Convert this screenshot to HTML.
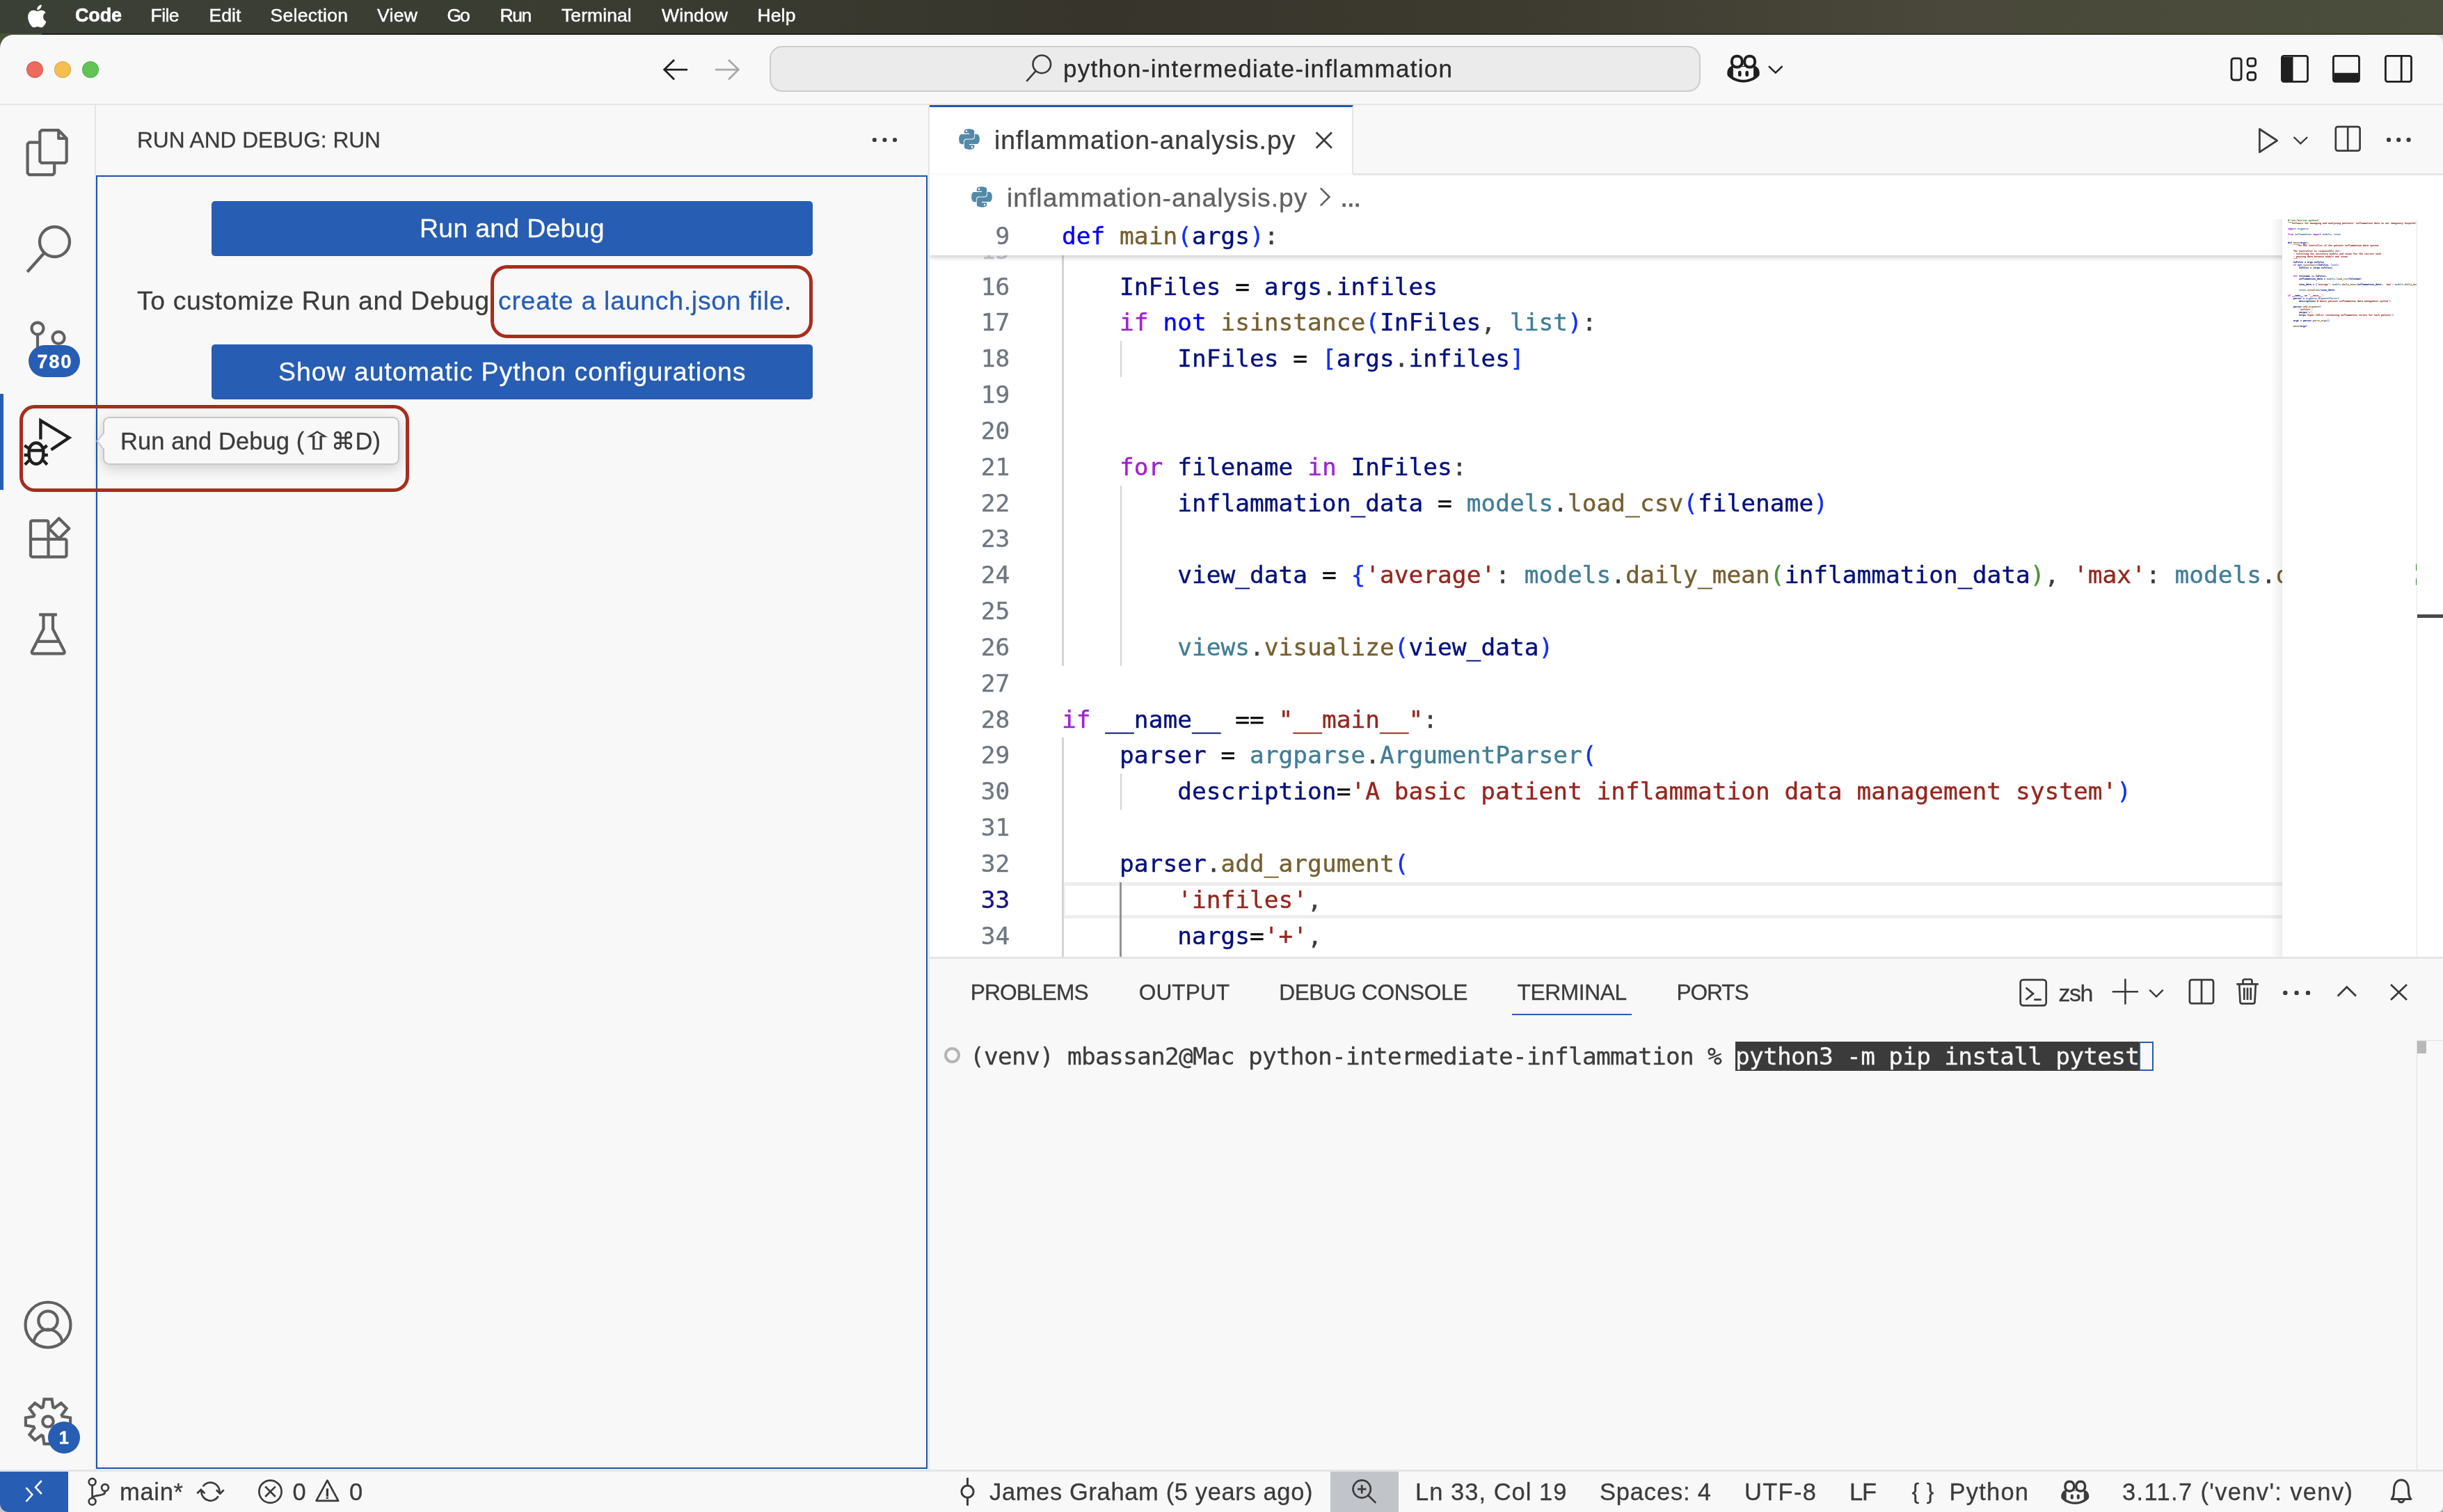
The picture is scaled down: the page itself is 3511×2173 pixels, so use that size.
<!DOCTYPE html>
<html lang="en"><head><meta charset="utf-8"><title>inflammation-analysis.py — python-intermediate-inflammation</title>
<style>
*{box-sizing:border-box;margin:0;padding:0}
html,body{width:3511px;height:2173px;overflow:hidden}
body{position:relative;background:#20231f;font-family:"Liberation Sans",sans-serif;color:#3b3b3b}
.t{position:absolute;white-space:pre;display:block;-webkit-text-stroke:0.28px}
.abs{position:absolute}
svg{position:absolute;overflow:visible}
.ic{fill:none;stroke:#616161;stroke-width:4.2;stroke-linecap:butt;stroke-linejoin:round}
.dk{stroke:#3b3b3b}
.code{position:absolute;white-space:pre;font:400 34.5px/51.84px "DejaVu Sans Mono","Liberation Mono",monospace;color:#3b3b3b;-webkit-text-stroke:0.4px}
.ln{position:absolute;white-space:pre;font:400 34.5px/51.84px "DejaVu Sans Mono","Liberation Mono",monospace;color:#6f7680;text-align:right;width:120px;-webkit-text-stroke:0.35px}
.k{color:#0000f5}.c{color:#a020d3}.f{color:#755f30}.v{color:#03107b}.s{color:#95261f}.m{color:#417d96}
.b1{color:#1330f0}.b2{color:#4e913f}.b3{color:#733c1d}.o{color:#000}.g{color:#377e22}
</style></head><body>
<div id="root" style="position:absolute;left:0;top:0;width:3511px;height:2173px;will-change:transform">

<div class="abs" id="menubar" style="left:0;top:0;width:3511px;height:48px;background:linear-gradient(90deg,#3b4036 0%,#3a3c31 25%,#37352b 45%,#3d3b30 62%,#49483a 80%,#4b4e3c 100%)"></div><div class="abs" style="left:0;top:48px;width:3511px;height:3px;background:linear-gradient(90deg,#1d201d 0%,#1f201b 50%,#3a3c2c 100%)"></div><div class="abs" style="left:3490px;top:50px;width:21px;height:28px;background:#dadada"></div>
<svg style="left:37px;top:4.500px" width="32.500" height="38" viewBox="0 0 170 200"><path fill="#fff" d="M150.4 68.2c-1 .8-18.600 10.700-18.600 32.800 0 25.500 22.400 34.600 23.100 34.800-.1.600-3.600 12.400-11.800 24.400-7.300 10.600-15 21.100-26.600 21.100s-14.600-6.800-28-6.800c-13.100 0-17.700 7-28.300 7s-18-9.800-26.600-21.700C23.800 145.600 16 123.700 16 102.900c0-33.300 21.700-51 43-51 11.300 0 20.800 7.400 27.900 7.400 6.800 0 17.300-7.900 30.200-7.900 4.900 0 22.400.4 33.300 16.800zM110.300 37.100c5.300-6.300 9.100-15.100 9.100-23.900 0-1.200-.1-2.400-.3-3.400-8.700.3-19 5.800-25.200 13-4.900 5.600-9.500 14.400-9.500 23.300 0 1.300.2 2.700.3 3.100.5.100 1.400.2 2.300.2 7.800 0 17.600-5.200 23.300-12.300z"/></svg>
<span id="t0" class="t" style="left:108.0px;top:4.7px;font:700 27.00px/35px 'Liberation Sans', sans-serif;color:#fff;letter-spacing:-0.167px;-webkit-text-stroke:0.6px #fff;">Code</span>
<span id="t1" class="t" style="left:216.6px;top:5.2px;font:400 26.50px/34px 'Liberation Sans', sans-serif;color:#fff;letter-spacing:-0.634px;-webkit-text-stroke:0.45px #fff;">File</span>
<span id="t2" class="t" style="left:300.6px;top:5.2px;font:400 26.50px/34px 'Liberation Sans', sans-serif;color:#fff;letter-spacing:0.009px;-webkit-text-stroke:0.45px #fff;">Edit</span>
<span id="t3" class="t" style="left:388.5px;top:5.2px;font:400 26.50px/34px 'Liberation Sans', sans-serif;color:#fff;letter-spacing:0.311px;-webkit-text-stroke:0.45px #fff;">Selection</span>
<span id="t4" class="t" style="left:542.0px;top:5.2px;font:400 26.50px/34px 'Liberation Sans', sans-serif;color:#fff;letter-spacing:0.344px;-webkit-text-stroke:0.45px #fff;">View</span>
<span id="t5" class="t" style="left:642.4px;top:5.2px;font:400 26.50px/34px 'Liberation Sans', sans-serif;color:#fff;letter-spacing:-1.959px;-webkit-text-stroke:0.45px #fff;">Go</span>
<span id="t6" class="t" style="left:718.6px;top:5.2px;font:400 26.50px/34px 'Liberation Sans', sans-serif;color:#fff;letter-spacing:-1.512px;-webkit-text-stroke:0.45px #fff;">Run</span>
<span id="t7" class="t" style="left:807.0px;top:5.2px;font:400 26.50px/34px 'Liberation Sans', sans-serif;color:#fff;letter-spacing:0.080px;-webkit-text-stroke:0.45px #fff;">Terminal</span>
<span id="t8" class="t" style="left:951.0px;top:5.2px;font:400 26.50px/34px 'Liberation Sans', sans-serif;color:#fff;letter-spacing:0.147px;-webkit-text-stroke:0.45px #fff;">Window</span>
<span id="t9" class="t" style="left:1088.4px;top:5.2px;font:400 26.50px/34px 'Liberation Sans', sans-serif;color:#fff;letter-spacing:0.161px;-webkit-text-stroke:0.45px #fff;">Help</span>
<div class="abs" style="left:0;top:2150px;width:40px;height:23px;background:#c9c9c9"></div><div class="abs" style="left:3490px;top:2150px;width:21px;height:23px;background:#a9a9a9"></div><div class="abs" style="left:0;top:48px;width:60px;height:40px;background:#485237"></div><div class="abs" id="win" style="left:0;top:49.500px;width:3511px;height:2123.500px;background:#f8f8f8;border-radius:19px 13px 7px 12px;overflow:hidden">
<div class="abs" style="left:0;top:-49.500px;width:3511px;height:2173px;will-change:transform">
<div class="abs" style="left:0;top:149px;width:3511px;height:2px;background:#e4e4e4"></div>
<div class="abs" style="left:38.0px;top:87.8px;width:24px;height:24px;border-radius:50%;background:#ed6a5e;box-shadow:inset 0 0 0 1px rgba(0,0,0,.12)"></div>
<div class="abs" style="left:78.0px;top:87.8px;width:24px;height:24px;border-radius:50%;background:#f4bf4f;box-shadow:inset 0 0 0 1px rgba(0,0,0,.12)"></div>
<div class="abs" style="left:118.0px;top:87.8px;width:24px;height:24px;border-radius:50%;background:#61c554;box-shadow:inset 0 0 0 1px rgba(0,0,0,.12)"></div>
<svg style="left:940px;top:76px" width="140" height="50" viewBox="940 76 140 50"><path d="M988 100.100H955M969 85.900l-14.300 14.200 14.300 14.200" fill="none" stroke="#1f1f1f" stroke-width="2.800"/><path d="M1028 100.100h33M1047 85.900l14.300 14.200-14.300 14.200" fill="none" stroke="#a8a8a8" stroke-width="2.800"/></svg>
<div class="abs" style="left:1106px;top:66px;width:1338px;height:66px;background:#ebebeb;border:2px solid #cdcdcd;border-radius:18px"></div>
<svg style="left:1470px;top:76px" width="50" height="50" viewBox="1470 76 50 50"><circle cx="1497.300" cy="92.300" r="12.800" fill="none" stroke="#3b3b3b" stroke-width="2.600"/><path d="M1488.700 101.800L1475.300 116.800" stroke="#3b3b3b" stroke-width="2.600" fill="none"/></svg>
<span id="t10" class="t" style="left:1528.0px;top:76.3px;font:400 35.00px/46px 'Liberation Sans', sans-serif;color:#2a2a2a;letter-spacing:1.277px;">python-intermediate-inflammation</span>
<svg id="copilot1" style="left:2482px;top:78.300px" width="47" height="40.400" viewBox="0 0 47 40.400"><path d="M6 17C2 19.500.3 22.500.3 27c0 2 .2 3 .7 4 5 5.500 13 9.400 22.500 9.400S41 36.500 46 31c.5-1 .7-2 .7-4 0-4.500-1.700-7.500-5.700-10z" fill="#1f1f1f"/><path d="M8.900 18h29.200v14.400c-4.100 2.600-9.100 4.300-14.600 4.300s-10.500-1.700-14.600-4.300z" fill="#f8f8f8"/><rect x="6.900" y="2.700" width="14.900" height="15.800" rx="6.500" ry="7" fill="#f8f8f8" stroke="#1f1f1f" stroke-width="4"/><rect x="25.200" y="2.700" width="14.900" height="15.800" rx="6.500" ry="7" fill="#f8f8f8" stroke="#1f1f1f" stroke-width="4"/><rect x="16" y="23.800" width="4.600" height="8.300" rx="2.300" fill="#1f1f1f"/><rect x="26.400" y="23.800" width="4.600" height="8.300" rx="2.300" fill="#1f1f1f"/></svg>
<svg style="left:2536px;top:88px" width="32" height="24" viewBox="2536 88 32 24"><path d="M2542 95.200l9.800 9.400 9.800-9.400" fill="none" stroke="#1f1f1f" stroke-width="2.500"/></svg>
<svg style="left:3205px;top:81.500px" width="40" height="36" viewBox="0 0 40 36"><g fill="none" stroke="#1f1f1f" stroke-width="2.800"><rect x="2" y="1.800" width="14.100" height="31.200" rx="3.500"/><rect x="25.100" y="1.800" width="11.500" height="11.200" rx="3.200"/><rect x="25.100" y="22" width="11.500" height="11" rx="3.200"/></g></svg>
<svg style="left:3277.800px;top:79px" width="40" height="40" viewBox="0 0 40 40"><path d="M2 3h15.500v34H2z" fill="#1f1f1f"/><rect x="1.400" y="1.400" width="37.100" height="36.900" rx="2.800" fill="none" stroke="#1f1f1f" stroke-width="2.800"/></svg>
<svg style="left:3352.300px;top:79px" width="40" height="40" viewBox="0 0 40 40"><path d="M2.500 25.800h35v11.500h-35z" fill="#1f1f1f"/><rect x="1.400" y="1.400" width="37.100" height="36.900" rx="2.800" fill="none" stroke="#1f1f1f" stroke-width="2.800"/></svg>
<svg style="left:3427.300px;top:79px" width="40" height="40" viewBox="0 0 40 40"><rect x="1.400" y="1.400" width="37.100" height="36.900" rx="2.800" fill="none" stroke="#1f1f1f" stroke-width="2.800"/><path d="M24.200 2v36" stroke="#1f1f1f" stroke-width="2.800"/></svg>
<div class="abs" style="left:136.200px;top:151px;width:2px;height:1961.500px;background:#e5e5e5"></div>
<div class="abs" style="left:0;top:566px;width:5px;height:138px;background:#275db2"></div>
<svg style="left:20px;top:170px" width="110" height="360" viewBox="20 170 110 360"><g class="ic" stroke-width="4.200" stroke-linejoin="bevel"><path d="M84.200 187.200H59.800L57.300 189.700V231.700L59.800 234.200H93.200L95.700 231.700V198.900zM84.200 187.200V198.900H95.700"/><path d="M57.300 204.600H42.100L39.600 207.100V248.700L42.100 251.200H75.700L78.200 248.700V234.200"/><circle cx="78.500" cy="347.500" r="21.500" stroke-width="4.300"/><path d="M63.800 363.200L39.300 390.800" stroke-width="4.300"/><circle cx="54" cy="472.100" r="8.500"/><circle cx="84.100" cy="485.400" r="8.500"/><path d="M54 480.600V500"/></g></svg>
<div class="abs" style="left:41px;top:496px;width:74px;height:45.700px;border-radius:23px;background:#275db2"></div>
<span id="t11" class="t" style="left:53.3px;top:502.2px;font:700 27.50px/36px 'Liberation Sans', sans-serif;color:#fff;letter-spacing:1.655px;">780</span>
<svg style="left:20px;top:590px" width="110" height="90" viewBox="20 590 110 90"><g fill="none" stroke="#1f1f1f" stroke-width="4.400" stroke-linejoin="miter"><path d="M58.400 631.500V604.300L99.300 629 73.500 646.300"/><rect x="41.700" y="636.500" width="20.600" height="30.200" rx="10.300" ry="12.500"/><path d="M41.500 647.400h21"/><path d="M42.500 645.300L35.200 640.200M61.500 645.300l6.100-5.100M34.600 654h6M63.800 654h5M41.800 661.700L35.800 667.700M62.200 661.700l5.600 6"/></g></svg>
<svg style="left:20px;top:720px" width="110" height="240" viewBox="20 720 110 240"><g class="ic" stroke-width="4.300"><path d="M46.500 748.300h20.500a2.500 2.500 0 0 1 2.500 2.500v49.500H46.500a2.500 2.500 0 0 1-2.500-2.500v-47a2.500 2.500 0 0 1 2.500-2.500zM44 774.800h49a2.500 2.500 0 0 1 2.500 2.500v20.500a2.500 2.500 0 0 1-2.500 2.500H69.500"/><path d="M84.800 744.900l14.500 14.500-14.500 14.500-14.500-14.500z"/><path d="M56.200 883.300h25.700M62.500 883.500v20.500L46 936c-.9 1.700.1 3.400 2 3.400h42.500c1.900 0 2.900-1.700 2-3.400L76 904v-20.500M53.500 921.900h31.500"/></g></svg>
<svg style="left:34px;top:1869px" width="70" height="70" viewBox="0 0 70 70"><g class="ic" stroke-width="4.400"><circle cx="35" cy="35" r="32.500"/><circle cx="35" cy="29" r="13.700"/><path d="M14.500 59c2.500-10.500 10.500-17.300 20.500-17.300S53 48.500 55.500 59"/></g></svg>
<svg style="left:34px;top:2007.500px" width="70" height="70" viewBox="0 0 70 70"><g class="ic" stroke-width="4.300"><path d="M27.7 14.4L29.5 2.9L40.5 2.9L42.3 14.4L44.4 15.3L53.8 8.4L61.6 16.2L54.7 25.6L55.6 27.7L67.1 29.5L67.1 40.5L55.6 42.3L54.7 44.4L61.6 53.8L53.8 61.6L44.4 54.7L42.3 55.6L40.5 67.1L29.5 67.1L27.7 55.6L25.6 54.7L16.2 61.6L8.4 53.8L15.3 44.4L14.4 42.3L2.9 40.5L2.9 29.5L14.4 27.7L15.3 25.6L8.4 16.2L16.2 8.4L25.6 15.3z" stroke-linejoin="miter"/><circle cx="35" cy="35" r="7.700"/></g></svg>
<div class="abs" style="left:69px;top:2043px;width:46px;height:46px;border-radius:50%;background:#275db2"></div>
<span id="t12" class="t" style="left:84.5px;top:2049.0px;font:700 26.00px/34px 'Liberation Sans', sans-serif;color:#fff;letter-spacing:0.031px;">1</span>
<span id="t13" class="t" style="left:197.0px;top:181.0px;font:400 31.70px/41px 'Liberation Sans', sans-serif;color:#3b3b3b;letter-spacing:-0.021px;">RUN AND DEBUG: RUN</span>
<svg style="left:1250px;top:190px" width="44" height="22" viewBox="1250 190 44 22"><g fill="#3b3b3b"><circle cx="1256.800" cy="201" r="3.100"/><circle cx="1271.400" cy="201" r="3.100"/><circle cx="1286" cy="201" r="3.100"/></g></svg>
<div class="abs" style="left:138px;top:252px;width:1195px;height:1859.400px;border:2px solid #1c52aa"></div>
<div class="abs" style="left:304px;top:289px;width:864px;height:78.500px;background:#275db2;border-radius:5px"></div>
<span id="t14" class="t" style="left:603.0px;top:304.0px;font:400 37.40px/49px 'Liberation Sans', sans-serif;color:#fff;letter-spacing:0.297px;-webkit-text-stroke:0.3px #fff;">Run and Debug</span>
<span id="t15" class="t" style="left:197.0px;top:407.5px;font:400 37.40px/49px 'Liberation Sans', sans-serif;color:#3b3b3b;letter-spacing:0.619px;">To customize Run and Debug</span>
<span id="t16" class="t" style="left:716.0px;top:407.5px;font:400 37.40px/49px 'Liberation Sans', sans-serif;color:#275db2;letter-spacing:0.736px;">create a launch.json file</span>
<span id="t17" class="t" style="left:1127.0px;top:407.5px;font:400 37.40px/49px 'Liberation Sans', sans-serif;color:#3b3b3b;letter-spacing:0.000px;">.</span>
<div class="abs" style="left:304px;top:495px;width:864px;height:78.500px;background:#275db2;border-radius:5px"></div>
<span id="t18" class="t" style="left:400.0px;top:510.0px;font:400 37.40px/49px 'Liberation Sans', sans-serif;color:#fff;letter-spacing:1.014px;-webkit-text-stroke:0.3px #fff;">Show automatic Python configurations</span>
<div class="abs" style="left:1336px;top:151px;width:2175px;height:1224px;background:#fff"></div>
<div class="abs" style="left:1334px;top:151px;width:2px;height:1961.500px;background:#e4e4e4"></div>
<div class="abs" style="left:1336px;top:151px;width:2175px;height:101px;background:#f8f8f8;border-bottom:3px solid #e5e5e5"></div>
<div class="abs" style="left:1336px;top:151px;width:609px;height:101px;background:#fff;border-top:3px solid #2058b0;border-right:2px solid #e4e4e4;border-bottom:3px solid #f9f9f9"></div>
<svg style="left:1375.8px;top:183.2px" width="34" height="34" viewBox="0 0 32 32"><path fill="#5389a8" d="M15.900 2c-7.100 0-6.700 3.100-6.700 3.100v3.200h6.800v1H6.500S2 8.800 2 16s4 6.900 4 6.900h2.400v-3.300s-.1-4 3.900-4h6.700s3.800.1 3.800-3.600V5.800S23.400 2 15.900 2zm-3.700 2.100a1.200 1.200 0 1 1 0 2.400 1.200 1.200 0 0 1 0-2.400z"/><path fill="#5389a8" d="M16.100 30c7.100 0 6.700-3.100 6.700-3.100v-3.200H16v-1h9.500S30 23.200 30 16s-4-6.900-4-6.900h-2.400v3.300s.1 4-3.900 4H13s-3.800-.1-3.800 3.600v6.200S8.600 30 16.100 30zm3.700-2.100a1.200 1.200 0 1 1 0-2.400 1.200 1.200 0 0 1 0 2.400z"/></svg>
<span id="t19" class="t" style="left:1429.0px;top:177.0px;font:400 37.40px/49px 'Liberation Sans', sans-serif;color:#3b3b3b;letter-spacing:1.005px;">inflammation-analysis.py</span>
<svg style="left:1885px;top:185px" width="36" height="34" viewBox="1885 185 36 34"><path d="M1891.700 190.200l22.200 22.600M1913.900 190.200l-22.200 22.600" fill="none" stroke="#3b3b3b" stroke-width="2.700"/></svg>
<svg style="left:3230px;top:170px" width="260" height="64" viewBox="3230 170 260 64"><g fill="none" stroke="#3b3b3b" stroke-width="2.700"><path d="M3247.400 185.500v33.200L3272.600 202z" stroke-linejoin="round"/><path d="M3296.500 197l9.800 9.300 9.800-9.300" stroke-width="2.400"/><rect x="3356.800" y="182.200" width="34.800" height="34.400" rx="3"/><path d="M3374.200 182.500v34"/></g><g fill="#3b3b3b"><circle cx="3433" cy="200.900" r="3.100"/><circle cx="3447.200" cy="200.900" r="3.100"/><circle cx="3461.600" cy="200.900" r="3.100"/></g></svg>
<svg style="left:1393.7px;top:265.8px" width="34" height="34" viewBox="0 0 32 32"><path fill="#5389a8" d="M15.900 2c-7.100 0-6.700 3.100-6.700 3.100v3.200h6.800v1H6.500S2 8.800 2 16s4 6.900 4 6.900h2.400v-3.300s-.1-4 3.900-4h6.700s3.800.1 3.800-3.600V5.800S23.400 2 15.900 2zm-3.700 2.100a1.200 1.200 0 1 1 0 2.400 1.200 1.200 0 0 1 0-2.400z"/><path fill="#5389a8" d="M16.100 30c7.100 0 6.700-3.100 6.700-3.100v-3.200H16v-1h9.500S30 23.200 30 16s-4-6.900-4-6.900h-2.400v3.300s.1 4-3.900 4H13s-3.800-.1-3.800 3.600v6.200S8.600 30 16.100 30zm3.700-2.100a1.200 1.200 0 1 1 0-2.400 1.200 1.200 0 0 1 0 2.400z"/></svg>
<span id="t20" class="t" style="left:1447.0px;top:259.5px;font:400 37.40px/49px 'Liberation Sans', sans-serif;color:#616161;letter-spacing:0.961px;">inflammation-analysis.py</span>
<svg style="left:1890px;top:270px" width="28" height="36" viewBox="1890 270 28 36"><path d="M1897.800 270.300l12.700 12.700-12.700 12.700" fill="none" stroke="#616161" stroke-width="2.600"/></svg>
<span id="t21" class="t" style="left:1926.2px;top:267.3px;font:700 30.00px/39px 'Liberation Sans', sans-serif;color:#616161;letter-spacing:0.000px;">…</span>
<div class="abs" id="edclip" style="left:1336px;top:315px;width:1944px;height:1060px;overflow:hidden">
<div class="abs" style="left:193.0px;top:953.0px;width:2000px;height:52.0px;border-top:5px solid #eee;border-bottom:5px solid #eee;border-left:2px solid #f1f1f1"></div>
<div class="abs" style="left:190.4px;top:19.6px;width:2.6px;height:622.1px;background:#d4d4d4"></div>
<div class="abs" style="left:273.5px;top:175.2px;width:2.6px;height:51.8px;background:#d4d4d4"></div>
<div class="abs" style="left:273.5px;top:382.5px;width:2.6px;height:259.2px;background:#d4d4d4"></div>
<div class="abs" style="left:190.4px;top:745.4px;width:2.6px;height:362.9px;background:#d4d4d4"></div>
<div class="abs" style="left:273.5px;top:797.2px;width:2.6px;height:51.8px;background:#d4d4d4"></div>
<div class="abs" style="left:273.2px;top:952.8px;width:3.0px;height:155.5px;background:#939393"></div>
<div class="ln" style="left:-4.8px;top:19.6px;color:#c9ccd0">15</div>
<div class="ln" style="left:-4.8px;top:71.5px;color:#6f7680">16</div>
<div class="code" style="left:190.0px;top:71.5px"><span class="v">    InFiles</span> <span class="o">=</span> <span class="v">args</span>.<span class="v">infiles</span></div>
<div class="ln" style="left:-4.8px;top:123.3px;color:#6f7680">17</div>
<div class="code" style="left:190.0px;top:123.3px"><span class="c">    if</span> <span class="k">not</span> <span class="f">isinstance</span><span class="b1">(</span><span class="v">InFiles</span>, <span class="m">list</span><span class="b1">)</span>:</div>
<div class="ln" style="left:-4.8px;top:175.2px;color:#6f7680">18</div>
<div class="code" style="left:190.0px;top:175.2px"><span class="v">        InFiles</span> <span class="o">=</span> <span class="b1">[</span><span class="v">args</span>.<span class="v">infiles</span><span class="b1">]</span></div>
<div class="ln" style="left:-4.8px;top:227.0px;color:#6f7680">19</div>
<div class="ln" style="left:-4.8px;top:278.8px;color:#6f7680">20</div>
<div class="ln" style="left:-4.8px;top:330.7px;color:#6f7680">21</div>
<div class="code" style="left:190.0px;top:330.7px"><span class="c">    for</span> <span class="v">filename</span> <span class="c">in</span> <span class="v">InFiles</span>:</div>
<div class="ln" style="left:-4.8px;top:382.5px;color:#6f7680">22</div>
<div class="code" style="left:190.0px;top:382.5px"><span class="v">        inflammation_data</span> <span class="o">=</span> <span class="m">models</span>.<span class="f">load_csv</span><span class="b1">(</span><span class="v">filename</span><span class="b1">)</span></div>
<div class="ln" style="left:-4.8px;top:434.4px;color:#6f7680">23</div>
<div class="ln" style="left:-4.8px;top:486.2px;color:#6f7680">24</div>
<div class="code" style="left:190.0px;top:486.2px"><span class="v">        view_data</span> <span class="o">=</span> <span class="b1">{</span><span class="s">&#x27;average&#x27;</span>: <span class="m">models</span>.<span class="f">daily_mean</span><span class="b2">(</span><span class="v">inflammation_data</span><span class="b2">)</span>, <span class="s">&#x27;max&#x27;</span>: <span class="m">models</span>.<span class="f">daily_max</span><span class="b2">(</span><span class="v">inflammation_data</span><span class="b2">)</span>, <span class="s">&#x27;min&#x27;</span>: <span class="m">models</span>.<span class="f">daily_min</span><span class="b2">(</span><span class="v">inflammation_data</span><span class="b2">)</span><span class="b1">}</span></div>
<div class="ln" style="left:-4.8px;top:538.0px;color:#6f7680">25</div>
<div class="ln" style="left:-4.8px;top:589.9px;color:#6f7680">26</div>
<div class="code" style="left:190.0px;top:589.9px"><span class="m">        views</span>.<span class="f">visualize</span><span class="b1">(</span><span class="v">view_data</span><span class="b1">)</span></div>
<div class="ln" style="left:-4.8px;top:641.7px;color:#6f7680">27</div>
<div class="ln" style="left:-4.8px;top:693.6px;color:#6f7680">28</div>
<div class="code" style="left:190.0px;top:693.6px"><span class="c">if</span> <span class="v">__name__</span> <span class="o">==</span> <span class="s">&quot;__main__&quot;</span>:</div>
<div class="ln" style="left:-4.8px;top:745.4px;color:#6f7680">29</div>
<div class="code" style="left:190.0px;top:745.4px"><span class="v">    parser</span> <span class="o">=</span> <span class="m">argparse</span>.<span class="m">ArgumentParser</span><span class="b1">(</span></div>
<div class="ln" style="left:-4.8px;top:797.2px;color:#6f7680">30</div>
<div class="code" style="left:190.0px;top:797.2px"><span class="v">        description</span><span class="o">=</span><span class="s">&#x27;A basic patient inflammation data management system&#x27;</span><span class="b1">)</span></div>
<div class="ln" style="left:-4.8px;top:849.1px;color:#6f7680">31</div>
<div class="ln" style="left:-4.8px;top:900.9px;color:#6f7680">32</div>
<div class="code" style="left:190.0px;top:900.9px"><span class="v">    parser</span>.<span class="f">add_argument</span><span class="b1">(</span></div>
<div class="ln" style="left:-4.8px;top:952.8px;color:#16117f">33</div>
<div class="code" style="left:190.0px;top:952.8px"><span class="s">        &#x27;infiles&#x27;</span>,</div>
<div class="ln" style="left:-4.8px;top:1004.6px;color:#6f7680">34</div>
<div class="code" style="left:190.0px;top:1004.6px"><span class="v">        nargs</span><span class="o">=</span><span class="s">&#x27;+&#x27;</span>,</div>
<div class="abs" style="left:0;top:0;width:2244px;height:51.800px;background:#fff;box-shadow:0 2px 7px 1px rgba(0,0,0,.2)"></div>
<div class="ln" style="left:-4.8px;top:-0.9px">9</div>
<div class="code" style="left:190.0px;top:-0.9px"><span class="k">def</span> <span class="f">main</span><span class="b1">(</span><span class="v">args</span><span class="b1">)</span>:</div>
</div>
<div class="abs" id="minimap" style="left:3280px;top:315px;width:193px;height:1060px;background:#fff;overflow:hidden">
<div class="abs" style="left:8px;top:0px;transform-origin:0 0;transform:scale(0.09625,0.07716);width:4000px">
<div class="code" style="left:0;top:0.00px;font-weight:700"><span class="g">#!/usr/bin/env python3</span></div>
<div class="code" style="left:0;top:51.84px;font-weight:700"><span class="s">&quot;&quot;&quot;Software for managing and analysing patients&#x27; inflammation data in our imaginary hospital.&quot;&quot;&quot;</span></div>
<div class="code" style="left:0;top:103.68px;font-weight:700"></div>
<div class="code" style="left:0;top:155.52px;font-weight:700"><span class="c">import</span> <span class="m">argparse</span></div>
<div class="code" style="left:0;top:207.36px;font-weight:700"></div>
<div class="code" style="left:0;top:259.20px;font-weight:700"><span class="c">from</span> <span class="m">inflammation</span> <span class="c">import</span> <span class="m">models</span>, <span class="m">views</span></div>
<div class="code" style="left:0;top:311.04px;font-weight:700"></div>
<div class="code" style="left:0;top:362.88px;font-weight:700"></div>
<div class="code" style="left:0;top:414.72px;font-weight:700"><span class="k">def</span> <span class="f">main</span><span class="b1">(</span><span class="v">args</span><span class="b1">)</span>:</div>
<div class="code" style="left:0;top:466.56px;font-weight:700"><span class="s">    &quot;&quot;&quot;The MVC Controller of the patient inflammation data system.</span></div>
<div class="code" style="left:0;top:518.40px;font-weight:700"></div>
<div class="code" style="left:0;top:570.24px;font-weight:700"><span class="s">    The Controller is responsible for:</span></div>
<div class="code" style="left:0;top:622.08px;font-weight:700"><span class="s">    - selecting the necessary models and views for the current task</span></div>
<div class="code" style="left:0;top:673.92px;font-weight:700"><span class="s">    - passing data between models and views</span></div>
<div class="code" style="left:0;top:725.76px;font-weight:700"><span class="s">    &quot;&quot;&quot;</span></div>
<div class="code" style="left:0;top:777.60px;font-weight:700"><span class="v">    InFiles</span> <span class="o">=</span> <span class="v">args</span>.<span class="v">infiles</span></div>
<div class="code" style="left:0;top:829.44px;font-weight:700"><span class="c">    if</span> <span class="k">not</span> <span class="f">isinstance</span><span class="b1">(</span><span class="v">InFiles</span>, <span class="m">list</span><span class="b1">)</span>:</div>
<div class="code" style="left:0;top:881.28px;font-weight:700"><span class="v">        InFiles</span> <span class="o">=</span> <span class="b1">[</span><span class="v">args</span>.<span class="v">infiles</span><span class="b1">]</span></div>
<div class="code" style="left:0;top:933.12px;font-weight:700"></div>
<div class="code" style="left:0;top:984.96px;font-weight:700"></div>
<div class="code" style="left:0;top:1036.80px;font-weight:700"><span class="c">    for</span> <span class="v">filename</span> <span class="c">in</span> <span class="v">InFiles</span>:</div>
<div class="code" style="left:0;top:1088.64px;font-weight:700"><span class="v">        inflammation_data</span> <span class="o">=</span> <span class="m">models</span>.<span class="f">load_csv</span><span class="b1">(</span><span class="v">filename</span><span class="b1">)</span></div>
<div class="code" style="left:0;top:1140.48px;font-weight:700"></div>
<div class="code" style="left:0;top:1192.32px;font-weight:700"><span class="v">        view_data</span> <span class="o">=</span> <span class="b1">{</span><span class="s">&#x27;average&#x27;</span>: <span class="m">models</span>.<span class="f">daily_mean</span><span class="b2">(</span><span class="v">inflammation_data</span><span class="b2">)</span>, <span class="s">&#x27;max&#x27;</span>: <span class="m">models</span>.<span class="f">daily_max</span><span class="b2">(</span><span class="v">inflammation_data</span><span class="b2">)</span>, <span class="s">&#x27;min&#x27;</span>: <span class="m">models</span>.<span class="f">daily_min</span><span class="b2">(</span><span class="v">inflammation_data</span><span class="b2">)</span><span class="b1">}</span></div>
<div class="code" style="left:0;top:1244.16px;font-weight:700"></div>
<div class="code" style="left:0;top:1296.00px;font-weight:700"><span class="m">        views</span>.<span class="f">visualize</span><span class="b1">(</span><span class="v">view_data</span><span class="b1">)</span></div>
<div class="code" style="left:0;top:1347.84px;font-weight:700"></div>
<div class="code" style="left:0;top:1399.68px;font-weight:700"><span class="c">if</span> <span class="v">__name__</span> <span class="o">==</span> <span class="s">&quot;__main__&quot;</span>:</div>
<div class="code" style="left:0;top:1451.52px;font-weight:700"><span class="v">    parser</span> <span class="o">=</span> <span class="m">argparse</span>.<span class="m">ArgumentParser</span><span class="b1">(</span></div>
<div class="code" style="left:0;top:1503.36px;font-weight:700"><span class="v">        description</span><span class="o">=</span><span class="s">&#x27;A basic patient inflammation data management system&#x27;</span><span class="b1">)</span></div>
<div class="code" style="left:0;top:1555.20px;font-weight:700"></div>
<div class="code" style="left:0;top:1607.04px;font-weight:700"><span class="v">    parser</span>.<span class="f">add_argument</span><span class="b1">(</span></div>
<div class="code" style="left:0;top:1658.88px;font-weight:700"><span class="s">        &#x27;infiles&#x27;</span>,</div>
<div class="code" style="left:0;top:1710.72px;font-weight:700"><span class="v">        nargs</span><span class="o">=</span><span class="s">&#x27;+&#x27;</span>,</div>
<div class="code" style="left:0;top:1762.56px;font-weight:700"><span class="v">        help</span><span class="o">=</span><span class="s">&#x27;Input CSV(s) containing inflammation series for each patient&#x27;</span><span class="b1">)</span></div>
<div class="code" style="left:0;top:1814.40px;font-weight:700"></div>
<div class="code" style="left:0;top:1866.24px;font-weight:700"><span class="v">    args</span> <span class="o">=</span> <span class="v">parser</span>.<span class="f">parse_args</span><span class="b1">()</span></div>
<div class="code" style="left:0;top:1918.08px;font-weight:700"></div>
<div class="code" style="left:0;top:1969.92px;font-weight:700"><span class="f">    main</span><span class="b1">(</span><span class="v">args</span><span class="b1">)</span></div>
</div></div>
<div class="abs" style="left:3263px;top:315px;width:17px;height:1060px;background:linear-gradient(90deg,rgba(0,0,0,0),rgba(0,0,0,.065))"></div>
<div class="abs" style="left:3472.800px;top:315px;width:1.200px;height:1060px;background:#e6e6e6"></div>
<div class="abs" style="left:3474px;top:883.200px;width:37px;height:5px;background:#4a4a4a"></div>
<div class="abs" style="left:3471.600px;top:810px;width:1.300px;height:10px;background:#4e913f;border-radius:1px"></div><div class="abs" style="left:3471.600px;top:831px;width:1.300px;height:10px;background:#4e913f;border-radius:1px"></div>
<div class="abs" style="left:1336px;top:1375px;width:2175px;height:2.700px;background:#e5e5e5"></div>
<span id="t22" class="t" style="left:1394.7px;top:1406.0px;font:400 31.70px/41px 'Liberation Sans', sans-serif;color:#3b3b3b;letter-spacing:-0.885px;">PROBLEMS</span>
<span id="t23" class="t" style="left:1636.8px;top:1406.0px;font:400 31.70px/41px 'Liberation Sans', sans-serif;color:#3b3b3b;letter-spacing:-0.013px;">OUTPUT</span>
<span id="t24" class="t" style="left:1838.2px;top:1406.0px;font:400 31.70px/41px 'Liberation Sans', sans-serif;color:#3b3b3b;letter-spacing:-0.446px;">DEBUG CONSOLE</span>
<span id="t25" class="t" style="left:2180.5px;top:1406.0px;font:400 31.70px/41px 'Liberation Sans', sans-serif;color:#3b3b3b;letter-spacing:-0.360px;">TERMINAL</span>
<span id="t26" class="t" style="left:2409.4px;top:1406.0px;font:400 31.70px/41px 'Liberation Sans', sans-serif;color:#3b3b3b;letter-spacing:-1.073px;">PORTS</span>
<div class="abs" style="left:2173px;top:1456.800px;width:171.500px;height:2px;background:#275db2"></div>
<svg style="left:2890px;top:1395px" width="600" height="64" viewBox="2890 1395 600 64"><g fill="none" stroke="#3b3b3b" stroke-width="2.700"><rect x="2903.700" y="1408.100" width="37" height="37" rx="4"/><path d="M2911.600 1419.500l10.400 8.600-10.400 8.600M2923.200 1436.700h10.500"/><path d="M3054.400 1406.700v36.900M3035.700 1425.200H3073" stroke-width="2.600"/><path d="M3089.300 1422.700l9.700 9.700 9.700-9.700" stroke-width="2.400"/><rect x="3146.900" y="1408.100" width="34.100" height="34.100" rx="3"/><path d="M3164 1408.500v33.500"/><path d="M3214.300 1414.300h31.500M3223.500 1414v-4a2.500 2.500 0 0 1 2.500-2.500h8a2.500 2.500 0 0 1 2.500 2.500v4M3218.200 1414.500l1.300 25.300a2.700 2.700 0 0 0 2.700 2.500h15.600a2.700 2.700 0 0 0 2.700-2.500l1.300-25.300M3225.300 1419.500v17.500M3230 1419.500v17.500M3234.700 1419.500v17.500"/><path d="M3359.600 1431.500l13.200-13 13.200 13"/><path d="M3436 1415l23 22M3459 1415l-23 22"/></g><g fill="#3b3b3b"><circle cx="3284.300" cy="1426.900" r="3.200"/><circle cx="3300.600" cy="1426.900" r="3.200"/><circle cx="3317" cy="1426.900" r="3.200"/></g></svg>
<span id="t27" class="t" style="left:2958.5px;top:1405.3px;font:400 34.00px/44px 'Liberation Sans', sans-serif;color:#3b3b3b;letter-spacing:-1.461px;">zsh</span>
<div class="abs" style="left:1357px;top:1504.500px;width:23px;height:23px;border-radius:50%;border:4px solid #b4b4b4"></div>
<div class="abs" style="left:2494.0px;top:1497px;width:580.0px;height:41.500px;background:#3b3b3b"></div>
<div class="abs" style="left:3074.0px;top:1497px;width:20.500px;height:41.500px;border:2.500px solid #275db2"></div>
<div class="t" style="left:1394.0px;top:1495px;font:400 34.5px/46px 'DejaVu Sans Mono', 'Liberation Mono', monospace;color:#3b3b3b;letter-spacing:-0.769px;-webkit-text-stroke:0.3px">(venv) mbassan2@Mac python-intermediate-inflammation % <span style="color:#f8f8f8">python3 -m pip install pytest</span></div>
<div class="abs" style="left:3472.800px;top:1495.500px;width:1.200px;height:617px;background:#dfdfdf"></div>
<div class="abs" style="left:3473px;top:1495.300px;width:38px;height:1.200px;background:#e2e2e2"></div><div class="abs" style="left:3474px;top:1496px;width:13.300px;height:18px;background:#b8b8b8"></div>
<div class="abs" style="left:0;top:2112.300px;width:3511px;height:2.700px;background:#e5e5e5"></div>
<div class="abs" style="left:0;top:2115px;width:98px;height:60px;background:#275db2"></div>
<svg style="left:30px;top:2120px" width="40" height="45" viewBox="0 0 40 45"><path d="M7.500 18l8.800 10-8.800 10M29.800 8L21 17.500l8.800 9.500" fill="none" stroke="#fff" stroke-width="2.600"/></svg>
<svg style="left:120px;top:2120px" width="40" height="45" viewBox="0 0 40 45"><g fill="none" stroke="#3b3b3b" stroke-width="2.700"><circle cx="12.600" cy="9.800" r="4.900"/><circle cx="12.600" cy="37.900" r="4.900"/><circle cx="31" cy="18" r="4.900"/><path d="M12.600 14.700V33M31 22.900c0 4.500-3 5.600-9 6.200-5.500.5-8.200 1.200-9.400 3.800"/></g></svg>
<span id="t28" class="t" style="left:172.0px;top:2121.5px;font:400 34.50px/45px 'Liberation Sans', sans-serif;color:#3b3b3b;letter-spacing:0.695px;">main*</span>
<svg style="left:280px;top:2120px" width="46" height="46" viewBox="280 2120 46 46"><g fill="none" stroke="#3b3b3b" stroke-width="2.700"><path d="M291.700 2136.300A13.100 13.100 0 0 1 315.600 2143.700L316.200 2146"/><path d="M310.800 2141.200l5.500 5.500 5.500-5.500"/><path d="M313.800 2150.300A13.100 13.100 0 0 1 289.400 2143.700L288.800 2141.500"/><path d="M283.300 2146.300l5.500-5.500 5.500 5.500"/></g></svg>
<svg style="left:368px;top:2124px" width="42" height="40" viewBox="368 2124 42 40"><g fill="none" stroke="#3b3b3b" stroke-width="2.700"><circle cx="388.500" cy="2143.700" r="16.100"/><path d="M381.200 2136.400l14.600 14.600M395.800 2136.400l-14.600 14.600"/></g></svg>
<span id="t29" class="t" style="left:420.5px;top:2121.5px;font:400 34.50px/45px 'Liberation Sans', sans-serif;color:#3b3b3b;letter-spacing:-0.688px;">0</span>
<svg style="left:450px;top:2122px" width="42" height="40" viewBox="450 2122 42 40"><g fill="none" stroke="#3b3b3b" stroke-width="2.700" stroke-linejoin="round"><path d="M470.400 2127.600L486.200 2156.800H454.600z"/><path d="M470.400 2139.300v11.400M470.400 2151.700v2.300" stroke-width="3.200"/></g></svg>
<span id="t30" class="t" style="left:502.0px;top:2121.5px;font:400 34.50px/45px 'Liberation Sans', sans-serif;color:#3b3b3b;letter-spacing:-0.688px;">0</span>
<svg style="left:1378px;top:2120px" width="26" height="50" viewBox="1378 2120 26 50"><g fill="none" stroke="#3b3b3b" stroke-width="3"><circle cx="1390.500" cy="2143.700" r="8.600"/><path d="M1390.500 2123.700v11.400M1390.500 2152.300v11.400"/></g></svg>
<span id="t31" class="t" style="left:1422.0px;top:2121.5px;font:400 34.50px/45px 'Liberation Sans', sans-serif;color:#3b3b3b;letter-spacing:0.633px;">James Graham (5 years ago)</span>
<div class="abs" style="left:1912px;top:2115px;width:98px;height:60px;background:#c1c4c9"></div>
<svg style="left:1940px;top:2124px" width="42" height="40" viewBox="1940 2124 42 40"><g fill="none" stroke="#3b3b3b" stroke-width="2.700"><circle cx="1957.200" cy="2140" r="12.600"/><path d="M1966.300 2149.300l11 10.600M1951 2140.200h12.400M1957.200 2134.100v12.400"/></g></svg>
<span id="t32" class="t" style="left:2034.0px;top:2121.5px;font:400 34.50px/45px 'Liberation Sans', sans-serif;color:#3b3b3b;letter-spacing:1.022px;">Ln 33, Col 19</span>
<span id="t33" class="t" style="left:2299.0px;top:2121.5px;font:400 34.50px/45px 'Liberation Sans', sans-serif;color:#3b3b3b;letter-spacing:0.820px;">Spaces: 4</span>
<span id="t34" class="t" style="left:2507.0px;top:2121.5px;font:400 34.50px/45px 'Liberation Sans', sans-serif;color:#3b3b3b;letter-spacing:1.312px;">UTF-8</span>
<span id="t35" class="t" style="left:2658.0px;top:2121.5px;font:400 34.50px/45px 'Liberation Sans', sans-serif;color:#3b3b3b;letter-spacing:-1.266px;">LF</span>
<span id="t36" class="t" style="left:2747.5px;top:2121.5px;font:400 32.00px/42px 'Liberation Sans', sans-serif;color:#3b3b3b;letter-spacing:10.625px;">{}</span>
<span id="t37" class="t" style="left:2801.5px;top:2121.5px;font:400 34.50px/45px 'Liberation Sans', sans-serif;color:#3b3b3b;letter-spacing:1.216px;">Python</span>
<svg id="copilot2" style="left:2961.500px;top:2126.500px" width="40.500" height="34.800" viewBox="0 0 47 40.400"><path d="M6 17C2 19.500.3 22.500.3 27c0 2 .2 3 .7 4 5 5.500 13 9.400 22.500 9.400S41 36.500 46 31c.5-1 .7-2 .7-4 0-4.500-1.700-7.500-5.700-10z" fill="#3b3b3b"/><path d="M8.900 18h29.200v14.400c-4.100 2.600-9.100 4.300-14.600 4.300s-10.500-1.700-14.600-4.300z" fill="#f8f8f8"/><rect x="6.900" y="2.700" width="14.900" height="15.800" rx="6.500" ry="7" fill="#f8f8f8" stroke="#3b3b3b" stroke-width="4"/><rect x="25.200" y="2.700" width="14.900" height="15.800" rx="6.500" ry="7" fill="#f8f8f8" stroke="#3b3b3b" stroke-width="4"/><rect x="16" y="23.800" width="4.600" height="8.300" rx="2.300" fill="#3b3b3b"/><rect x="26.400" y="23.800" width="4.600" height="8.300" rx="2.300" fill="#3b3b3b"/></svg>
<span id="t38" class="t" style="left:3050.0px;top:2121.5px;font:400 34.50px/45px 'Liberation Sans', sans-serif;color:#3b3b3b;letter-spacing:1.349px;">3.11.7 (&#x27;venv&#x27;: venv)</span>
<svg style="left:3434px;top:2124px" width="34" height="40" viewBox="0 0 34 40"><g fill="none" stroke="#3b3b3b" stroke-width="3" stroke-linejoin="round"><path d="M3 30.500c3-3 3.500-6 3.500-13C6.500 8 11 3 17 3s10.500 5 10.500 14.500c0 7 .5 10 3.500 13z"/><path d="M13 31a4 4 0 0 0 8 0"/></g></svg>
<div class="abs" style="left:148px;top:598.600px;width:425.500px;height:69.600px;background:#f8f8f8;border:2px solid #c6c6c6;border-radius:9px;box-shadow:0 5px 18px rgba(0,0,0,.17)"></div>
<svg style="left:138px;top:620px" width="12" height="28" viewBox="0 0 12 28"><path d="M13 1L1 14l12 13z" fill="#f8f8f8"/><path d="M11.500 1.500L1.500 14l10 12.500" fill="none" stroke="#c6c6c6" stroke-width="2"/></svg>
<span id="t39" class="t" style="left:173.0px;top:611.5px;font:400 34.50px/45px 'Liberation Sans', sans-serif;color:#3b3b3b;letter-spacing:0.107px;font-family:'Liberation Sans','DejaVu Sans',sans-serif;">Run and Debug (<span style="display:inline-block;transform:scale(1.7,1.02);margin:0 5.5px 0 4px;letter-spacing:0">⇧</span>⌘D)</span>
<div class="abs" style="left:27.500px;top:582.200px;width:560.700px;height:125.300px;border:5px solid #a82d1c;border-radius:22px"></div>
<div class="abs" style="left:705.400px;top:380.600px;width:463px;height:105.700px;border:5px solid #a82d1c;border-radius:24px"></div>
</div></div>
</div></body></html>
